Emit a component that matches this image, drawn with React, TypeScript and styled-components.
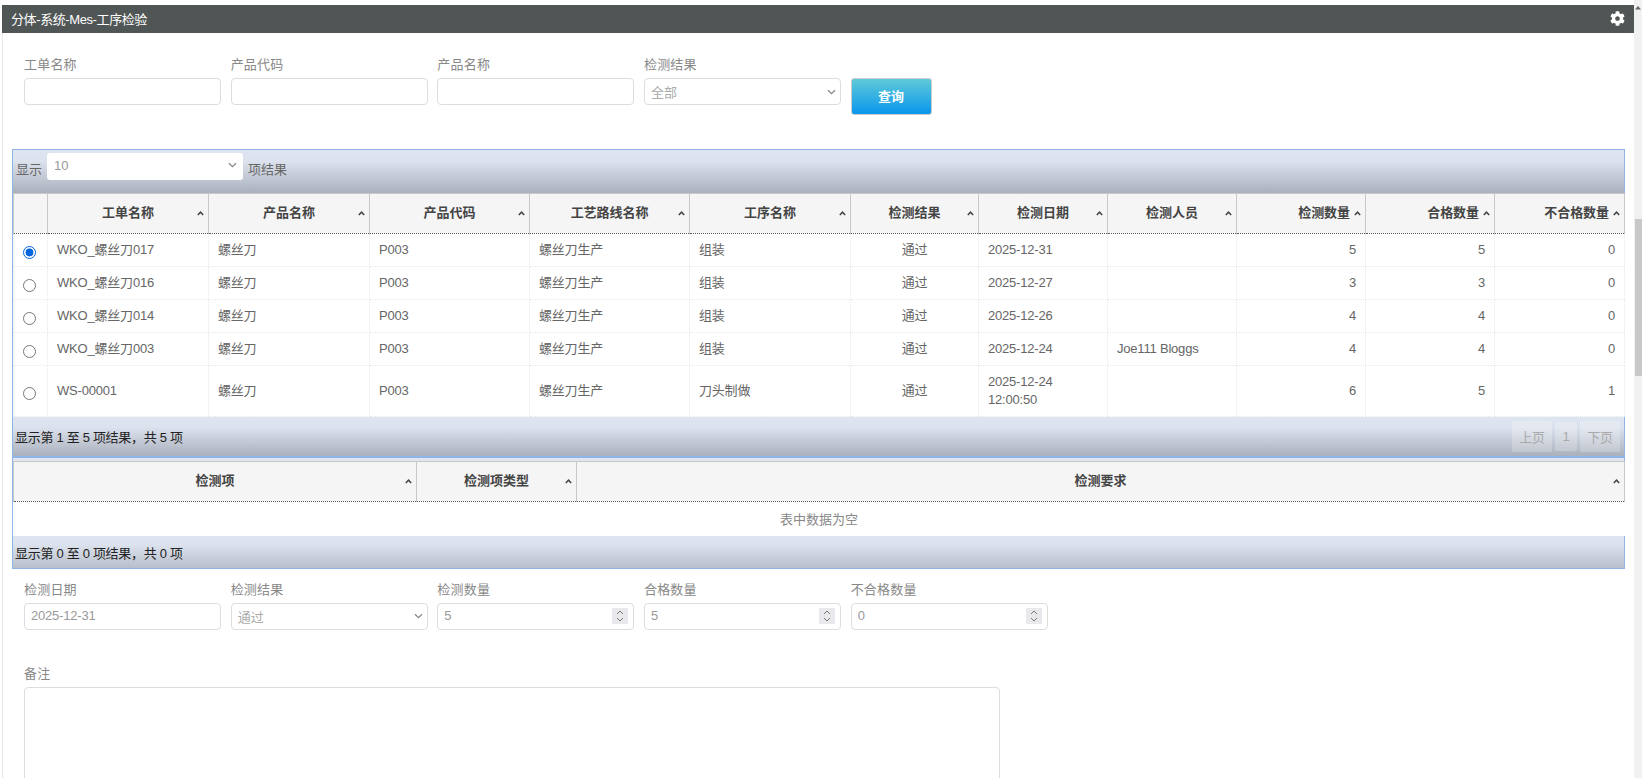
import type { ReactElement } from "react";
import styled, { createGlobalStyle } from "styled-components";
import { FaCog } from "react-icons/fa";

const FONT = `"Liberation Sans", "Noto Sans CJK SC", sans-serif`;

type Align = "left" | "center" | "right";

type Column = {
  title: string;
  width: number;
  head: Align;
  body: Align;
};

const COLUMNS: Column[] = [
  { title: "工单名称", width: 161, head: "center", body: "left" },
  { title: "产品名称", width: 161, head: "center", body: "left" },
  { title: "产品代码", width: 160, head: "center", body: "left" },
  { title: "工艺路线名称", width: 160, head: "center", body: "left" },
  { title: "工序名称", width: 161, head: "center", body: "left" },
  { title: "检测结果", width: 128, head: "center", body: "center" },
  { title: "检测日期", width: 129, head: "center", body: "left" },
  { title: "检测人员", width: 129, head: "center", body: "left" },
  { title: "检测数量", width: 129, head: "right", body: "right" },
  { title: "合格数量", width: 129, head: "right", body: "right" },
  { title: "不合格数量", width: 130, head: "right", body: "right" },
];

const ROWS: string[][] = [
  ["WKO_螺丝刀017", "螺丝刀", "P003", "螺丝刀生产", "组装", "通过", "2025-12-31", "", "5", "5", "0"],
  ["WKO_螺丝刀016", "螺丝刀", "P003", "螺丝刀生产", "组装", "通过", "2025-12-27", "", "3", "3", "0"],
  ["WKO_螺丝刀014", "螺丝刀", "P003", "螺丝刀生产", "组装", "通过", "2025-12-26", "", "4", "4", "0"],
  ["WKO_螺丝刀003", "螺丝刀", "P003", "螺丝刀生产", "组装", "通过", "2025-12-24", "Joe111 Bloggs", "4", "4", "0"],
  ["WS-00001", "螺丝刀", "P003", "螺丝刀生产", "刀头制做", "通过", "2025-12-24 12:00:50", "", "6", "5", "1"],
];

const ITEM_COLUMNS = [
  { title: "检测项", width: 403 },
  { title: "检测项类型", width: 160 },
  { title: "检测要求", width: 1048 },
];

function SortIcon(): ReactElement {
  return (
    <SortMark width="7" height="5" viewBox="0 0 7 5" aria-hidden="true">
      <path d="M0.8 4 L3.5 1.2 L6.2 4" fill="none" stroke="#444" strokeWidth="1.5" />
    </SortMark>
  );
}

function Chevron(): ReactElement {
  return (
    <svg width="9" height="6" viewBox="0 0 9 6" aria-hidden="true">
      <path d="M1 1.2 L4.5 4.6 L8 1.2" fill="none" stroke="#888" strokeWidth="1.3" />
    </svg>
  );
}

function Select({ value }: { value: string }): ReactElement {
  return (
    <SelectBox>
      <span>{value}</span>
      <Chevron />
    </SelectBox>
  );
}

function NumberInput({ value }: { value: number }): ReactElement {
  return (
    <NumberWrap>
      <TextInput type="number" defaultValue={value} readOnly />
      <Spinner>
        <svg width="8" height="14" viewBox="0 0 8 14" aria-hidden="true">
          <path d="M1 5 L4 2 L7 5 M1 9 L4 12 L7 9" fill="none" stroke="#777" strokeWidth="1" />
        </svg>
      </Spinner>
    </NumberWrap>
  );
}

export default function App(): ReactElement {
  return (
    <Shell>
      <GlobalStyle />
      <Page>
        <TitleBar>
          <span>分体-系统-Mes-工序检验</span>
          <FaCog size={15} color="#fff" />
        </TitleBar>
        <Panel>
          <SearchRow>
            <Field>
              <Label>工单名称</Label>
              <TextInput type="text" readOnly />
            </Field>
            <Field>
              <Label>产品代码</Label>
              <TextInput type="text" readOnly />
            </Field>
            <Field>
              <Label>产品名称</Label>
              <TextInput type="text" readOnly />
            </Field>
            <Field>
              <Label>检测结果</Label>
              <Select value="全部" />
            </Field>
            <SearchButton type="button">查询</SearchButton>
          </SearchRow>

          <Widget>
            <TopBar>
              <span>显示</span>
              <LengthSelect>
                <span>10</span>
                <Chevron />
              </LengthSelect>
              <span>项结果</span>
            </TopBar>
            <Table>
              <colgroup>
                <col style={{ width: 34 }} />
                {COLUMNS.map((c) => (
                  <col key={c.title} style={{ width: c.width }} />
                ))}
              </colgroup>
              <thead>
                <tr>
                  <HeadCell $align="center" />
                  {COLUMNS.map((c) => (
                    <HeadCell key={c.title} $align={c.head}>
                      {c.title}
                      <SortIcon />
                    </HeadCell>
                  ))}
                </tr>
              </thead>
              <tbody>
                {ROWS.map((row, i) => (
                  <tr key={row[0]}>
                    <RadioCell>
                      <Radio type="radio" name="inspection" defaultChecked={i === 0} />
                    </RadioCell>
                    {row.map((text, j) => (
                      <BodyCell key={COLUMNS[j].title} $align={COLUMNS[j].body}>
                        {text}
                      </BodyCell>
                    ))}
                  </tr>
                ))}
              </tbody>
            </Table>
            <FootBar>
              <span>显示第 1 至 5 项结果，共 5 项</span>
              <Pager>
                <PageButton>上页</PageButton>
                <PageNumber>1</PageNumber>
                <PageButton>下页</PageButton>
              </Pager>
            </FootBar>
            <Divider />
            <Table>
              <colgroup>
                {ITEM_COLUMNS.map((c) => (
                  <col key={c.title} style={{ width: c.width }} />
                ))}
              </colgroup>
              <thead>
                <tr>
                  {ITEM_COLUMNS.map((c) => (
                    <HeadCell key={c.title} $align="center">
                      {c.title}
                      <SortIcon />
                    </HeadCell>
                  ))}
                </tr>
              </thead>
              <tbody>
                <tr>
                  <EmptyCell colSpan={3}>表中数据为空</EmptyCell>
                </tr>
              </tbody>
            </Table>
            <EmptyFootBar>
              <span>显示第 0 至 0 项结果，共 0 项</span>
            </EmptyFootBar>
          </Widget>

          <DetailRow>
            <Field>
              <Label>检测日期</Label>
              <TextInput type="text" defaultValue="2025-12-31" readOnly />
            </Field>
            <Field>
              <Label>检测结果</Label>
              <Select value="通过" />
            </Field>
            <Field>
              <Label>检测数量</Label>
              <NumberInput value={5} />
            </Field>
            <Field>
              <Label>合格数量</Label>
              <NumberInput value={5} />
            </Field>
            <Field>
              <Label>不合格数量</Label>
              <NumberInput value={0} />
            </Field>
          </DetailRow>

          <NoteBlock>
            <Label>备注</Label>
            <NoteArea readOnly />
          </NoteBlock>
        </Panel>
      </Page>
      <ScrollRail>
        <RailArrow width="8" height="5" viewBox="0 0 8 5" aria-hidden="true">
          <path d="M1 4.5 L4 1 L7 4.5" fill="#666" />
        </RailArrow>
        <RailThumb />
      </ScrollRail>
    </Shell>
  );
}

const GlobalStyle = createGlobalStyle`
  html, body {
    margin: 0;
    padding: 0;
    height: 100%;
    overflow: hidden;
    background: #fff;
  }
  * {
    box-sizing: border-box;
  }
`;

const Shell = styled.div`
  display: flex;
  height: 778px;
  overflow: hidden;
  font-family: ${FONT};
  font-size: 13px;
  color: #666;
`;

const Page = styled.div`
  width: 1634px;
  padding: 5px 0 0 2px;
  flex: none;
`;

const TitleBar = styled.div`
  display: flex;
  align-items: center;
  justify-content: space-between;
  height: 28px;
  padding: 0 9px 1px 9px;
  background: #505656;
  color: #fff;
  font-size: 13px;
  letter-spacing: -0.4px;
`;

const Panel = styled.div`
  border-left: 1px solid #e8e8e8;
  padding: 22px 0 0 9px;
  height: 745px;
`;

const SearchRow = styled.div`
  display: flex;
  align-items: flex-start;
  gap: 9.67px;
  padding-left: 12px;
  height: 94px;
`;

const DetailRow = styled.div`
  display: flex;
  align-items: flex-start;
  gap: 9.67px;
  padding: 11px 0 0 12px;
`;

const Field = styled.div`
  width: 197px;
  display: flex;
  flex-direction: column;
  gap: 4px;
`;

const Label = styled.label`
  display: block;
  height: 19px;
  line-height: 19px;
  color: #888;
  font-size: 13px;
  letter-spacing: 0.2px;
`;

const TextInput = styled.input`
  width: 100%;
  height: 27px;
  padding: 0 6px 2px;
  border: 1px solid #ddd;
  border-radius: 4px;
  background: #fff;
  color: #999;
  font-family: ${FONT};
  font-size: 13px;
  letter-spacing: -0.2px;
  outline: none;
  appearance: textfield;

  &::-webkit-inner-spin-button {
    display: none;
  }
`;

const NumberWrap = styled.div`
  position: relative;
`;

const Spinner = styled.span`
  position: absolute;
  top: 5px;
  right: 6px;
  display: flex;
  align-items: center;
  justify-content: center;
  width: 16px;
  height: 16px;
  background: #e9e9ed;
`;

const SelectBox = styled.div`
  display: flex;
  align-items: center;
  justify-content: space-between;
  height: 27px;
  padding: 0 4px 0 6px;
  border: 1px solid #ddd;
  border-radius: 4px;
  background: #fff;
  color: #aaa;
`;

const SearchButton = styled.button`
  width: 81px;
  height: 37px;
  margin-top: 23px;
  border: 1px solid #ccc;
  border-radius: 3px;
  background: linear-gradient(#5fcad8, #0a96ee);
  color: #fff;
  font-family: ${FONT};
  font-size: 13px;
  font-weight: bold;
  padding: 0 0 3px;
`;

const Widget = styled.div`
  width: 1613px;
  margin-top: 0;
  border: 1px solid #8fb5e8;
`;

const barGradient = `linear-gradient(#dfe5f0 0%, #dde3ee 25%, #aab0bc 100%)`;

const TopBar = styled.div`
  display: flex;
  align-items: center;
  gap: 5px;
  height: 43px;
  padding: 0 3px 7px;
  background: ${barGradient};
  color: #666;
`;

const LengthSelect = styled.div`
  display: flex;
  align-items: center;
  justify-content: space-between;
  width: 196px;
  height: 27px;
  margin: -3px 0 0;
  padding: 0 6px 3px 7px;
  border-radius: 3px;
  background: #fff;
  color: #999;
`;

const Table = styled.table`
  width: 1611px;
  table-layout: fixed;
  border-collapse: collapse;
  background: #fff;
`;

const HeadCell = styled.th<{ $align: Align }>`
  position: relative;
  height: 40px;
  padding: 0 ${(p) => (p.$align === "right" ? "15px" : "10px")} 4px 10px;
  border: 1px solid #c8c8c8;
  border-bottom: 1px dotted #555;
  background: #f5f5f5;
  color: #444;
  font-size: 13px;
  font-weight: bold;
  letter-spacing: -0.05px;
  text-align: ${(p) => p.$align};
`;

const SortMark = styled.svg`
  position: absolute;
  right: 4px;
  top: 17px;
`;

const BodyCell = styled.td<{ $align: Align }>`
  height: 33px;
  padding: 7px 9px;
  border: 1px dotted #e8e8e8;
  color: #666;
  line-height: 18px;
  letter-spacing: -0.2px;
  text-align: ${(p) => p.$align};
`;

const RadioCell = styled.td`
  padding: 8px 3px 0 0;
  border: 1px dotted #e8e8e8;
  text-align: center;
`;

const Radio = styled.input`
  width: 13px;
  height: 13px;
  margin: 0;
  accent-color: #0066dd;
`;

const EmptyCell = styled.td`
  height: 34px;
  color: #888;
  text-align: center;
`;

const FootBar = styled.div`
  display: flex;
  align-items: center;
  justify-content: space-between;
  height: 39px;
  padding: 0 4px 1px 2px;
  background: ${barGradient};
  color: #222;
  letter-spacing: -0.3px;
`;

const EmptyFootBar = styled(FootBar)`
  height: 32px;
  padding-top: 2px;
  background: linear-gradient(#dfe5f0 0%, #dde3ee 25%, #b9bfca 100%);
`;

const Divider = styled.div`
  height: 5px;
  border-top: 2px solid #8fb5e8;
  background: #e0e5f0;
`;

const Pager = styled.div`
  display: flex;
  align-items: center;
  gap: 3px;
`;

const PageButton = styled.span`
  display: flex;
  align-items: center;
  justify-content: center;
  width: 40px;
  height: 31px;
  border-radius: 2px;
  background: rgba(255, 255, 255, 0.22);
  color: #aaa;
`;

const PageNumber = styled(PageButton)`
  width: 22px;
  height: 29px;
`;

const NoteBlock = styled.div`
  display: flex;
  flex-direction: column;
  gap: 4px;
  padding: 34px 0 0 12px;
`;

const NoteArea = styled.textarea`
  display: block;
  width: 976px;
  height: 200px;
  border: 1px solid #ddd;
  border-radius: 4px;
  resize: none;
  outline: none;
`;

const ScrollRail = styled.div`
  position: relative;
  flex: 1;
  display: flex;
  flex-direction: column;
  align-items: flex-end;
  padding-top: 5px;
  background: #f1f1f1;
`;

const RailArrow = styled.svg`
  flex: none;
`;

const RailThumb = styled.div`
  width: 7px;
  height: 157px;
  margin-top: 209px;
  background: #c8c8c8;
`;
